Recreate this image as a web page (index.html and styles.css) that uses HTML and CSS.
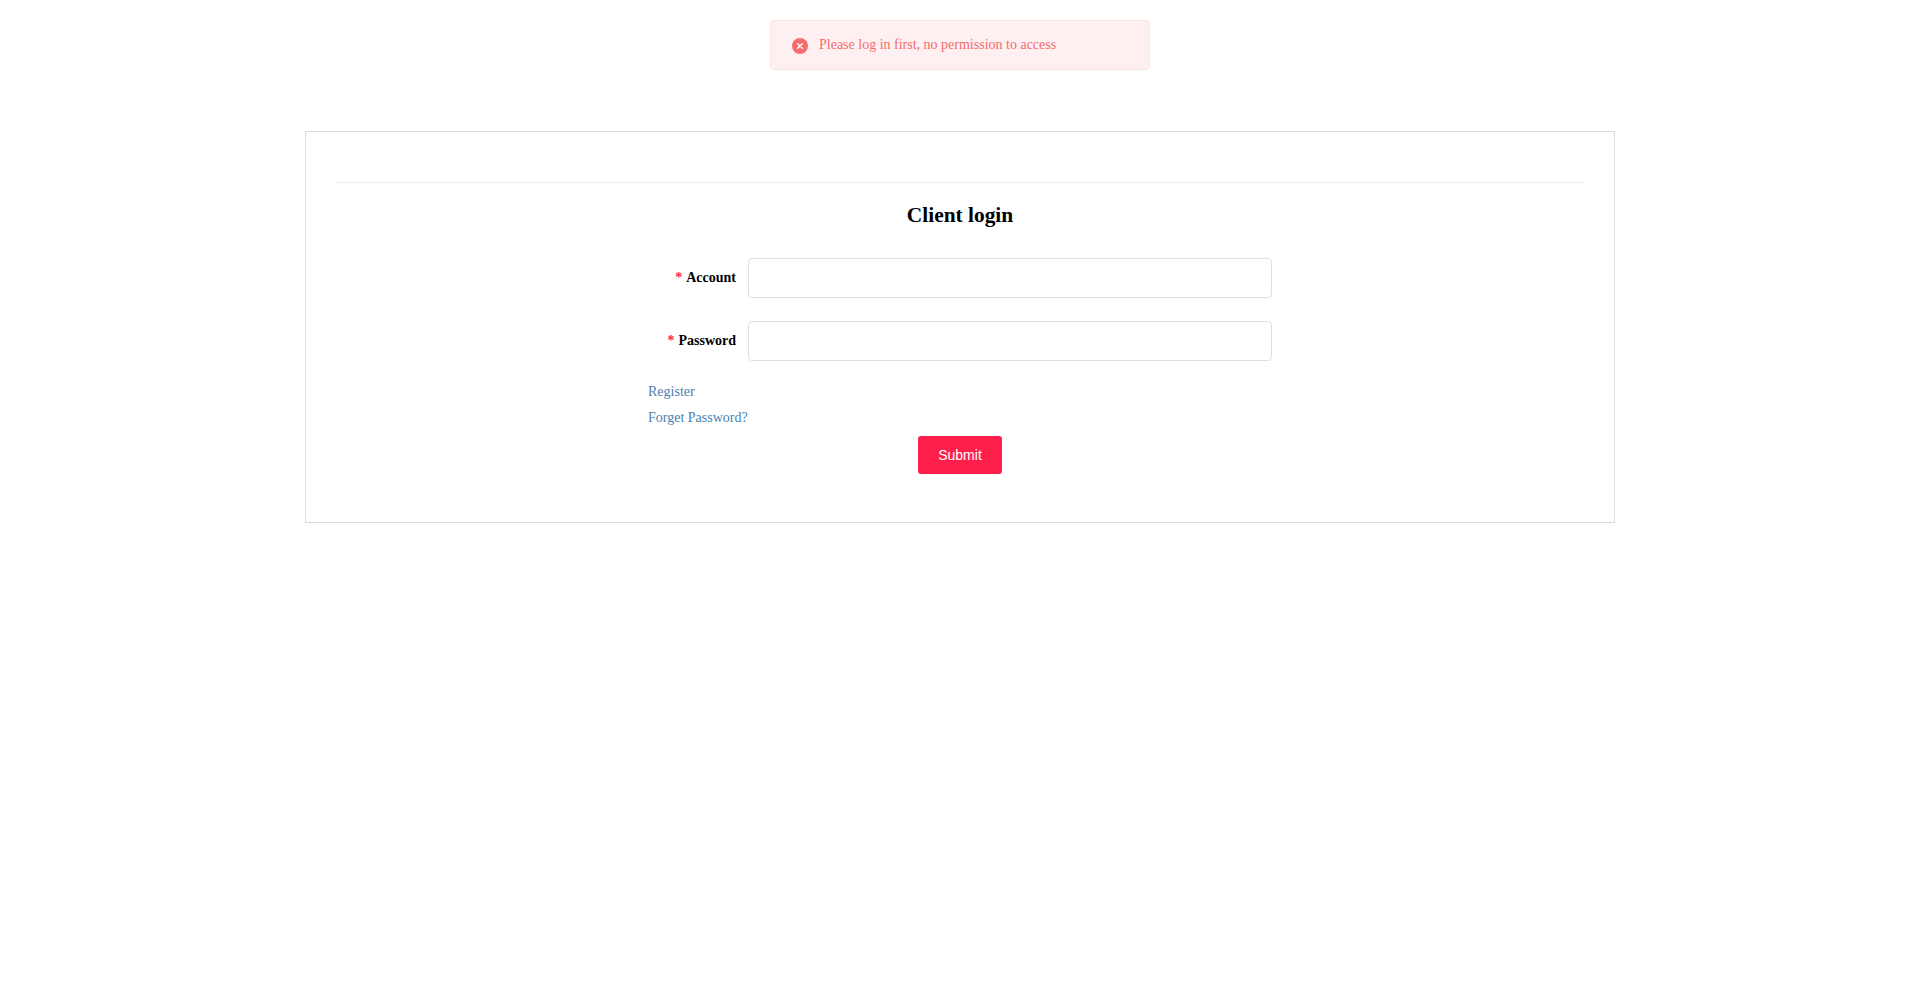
FILE: index.html
```html
<!DOCTYPE html>
<html lang="en">
<head>
    <meta charset="UTF-8">
    <meta name="viewport" content="width=device-width, initial-scale=1.0">
    <title>Client login</title>
    <link rel="stylesheet" href="styles.css">
</head>
<body>
    <div class="message">
        <svg class="message-icon" viewBox="0 0 16 16" width="16" height="16" aria-hidden="true">
            <circle cx="8" cy="8" r="8" fill="#f56c6c"/>
            <path d="M5.7 5.7 10.3 10.3M10.3 5.7 5.7 10.3" stroke="#fff" stroke-width="1.4" stroke-linecap="round" fill="none"/>
        </svg>
        <p>Please log in first, no permission to access</p>
    </div>

    <div class="container">
        <hr class="divider">
        <h2>Client login</h2>
        <form class="login-form" onsubmit="return false">
            <div class="form-group">
                <label for="account"><span class="required">*</span>Account</label>
                <input type="text" id="account">
            </div>
            <div class="form-group">
                <label for="password"><span class="required">*</span>Password</label>
                <input type="password" id="password">
            </div>
            <div class="links">
                <a href="#">Register</a>
                <a href="#">Forget Password?</a>
            </div>
            <div class="actions">
                <button class="btn" type="submit">Submit</button>
            </div>
        </form>
    </div>
</body>
</html>
```

FILE: styles.css
```css
* {
    box-sizing: border-box;
}
body {
    font-family: "Liberation Serif", "Times New Roman", serif;
    margin: 0;
    background-color: #fff;
    color: #000;
}
.message {
    position: fixed;
    top: 20px;
    left: 770px;
    width: 380px;
    height: 50px;
    display: flex;
    align-items: center;
    padding: 0 15px 0 21px;
    background-color: #fef0f0;
    border: 1px solid #fde2e2;
    border-radius: 4px;
}
.message-icon {
    flex: none;
    margin: 1px 11px 0 0;
}
.message p {
    margin: 0;
    font-size: 14px;
    line-height: 1;
    color: #f56c6c;
}
.container {
    width: 1310px;
    height: 392px;
    margin: 131px auto 0;
    padding: 50px 30px 0;
    border: 1px solid #dcdcdc;
}
.divider {
    margin: 0;
    border: none;
    border-top: 1px solid #eee;
}
h2 {
    margin: 20px 0 0;
    font-size: 21.4px;
    line-height: 25px;
    text-align: center;
}
.login-form {
    width: 624px;
    margin: 30px auto 0;
}
.form-group {
    display: flex;
    align-items: center;
    margin-bottom: 23px;
}
.form-group label {
    width: 100px;
    padding-right: 12px;
    font-size: 14px;
    font-weight: bold;
    text-align: right;
}
.required {
    margin-right: 4px;
    color: #ff1f4b;
}
.form-group input {
    flex: 1;
    height: 40px;
    padding: 0 15px;
    border: 1px solid #dcdfe6;
    border-radius: 4px;
    outline: none;
}
.links {
    display: flex;
    flex-direction: column;
    align-items: flex-start;
    font-size: 14px;
    line-height: 26px;
    margin-top: -5px;
}
.links a {
    color: #4a7fb0;
    text-decoration: none;
}
.actions {
    margin-top: 5px;
    text-align: center;
}
.btn {
    display: inline-block;
    width: 84px;
    height: 38px;
    padding: 0;
    font-family: "Liberation Sans", Arial, sans-serif;
    font-size: 14px;
    color: #fff;
    background-color: #ff1f4b;
    border: none;
    border-radius: 3px;
    cursor: pointer;
}
```
